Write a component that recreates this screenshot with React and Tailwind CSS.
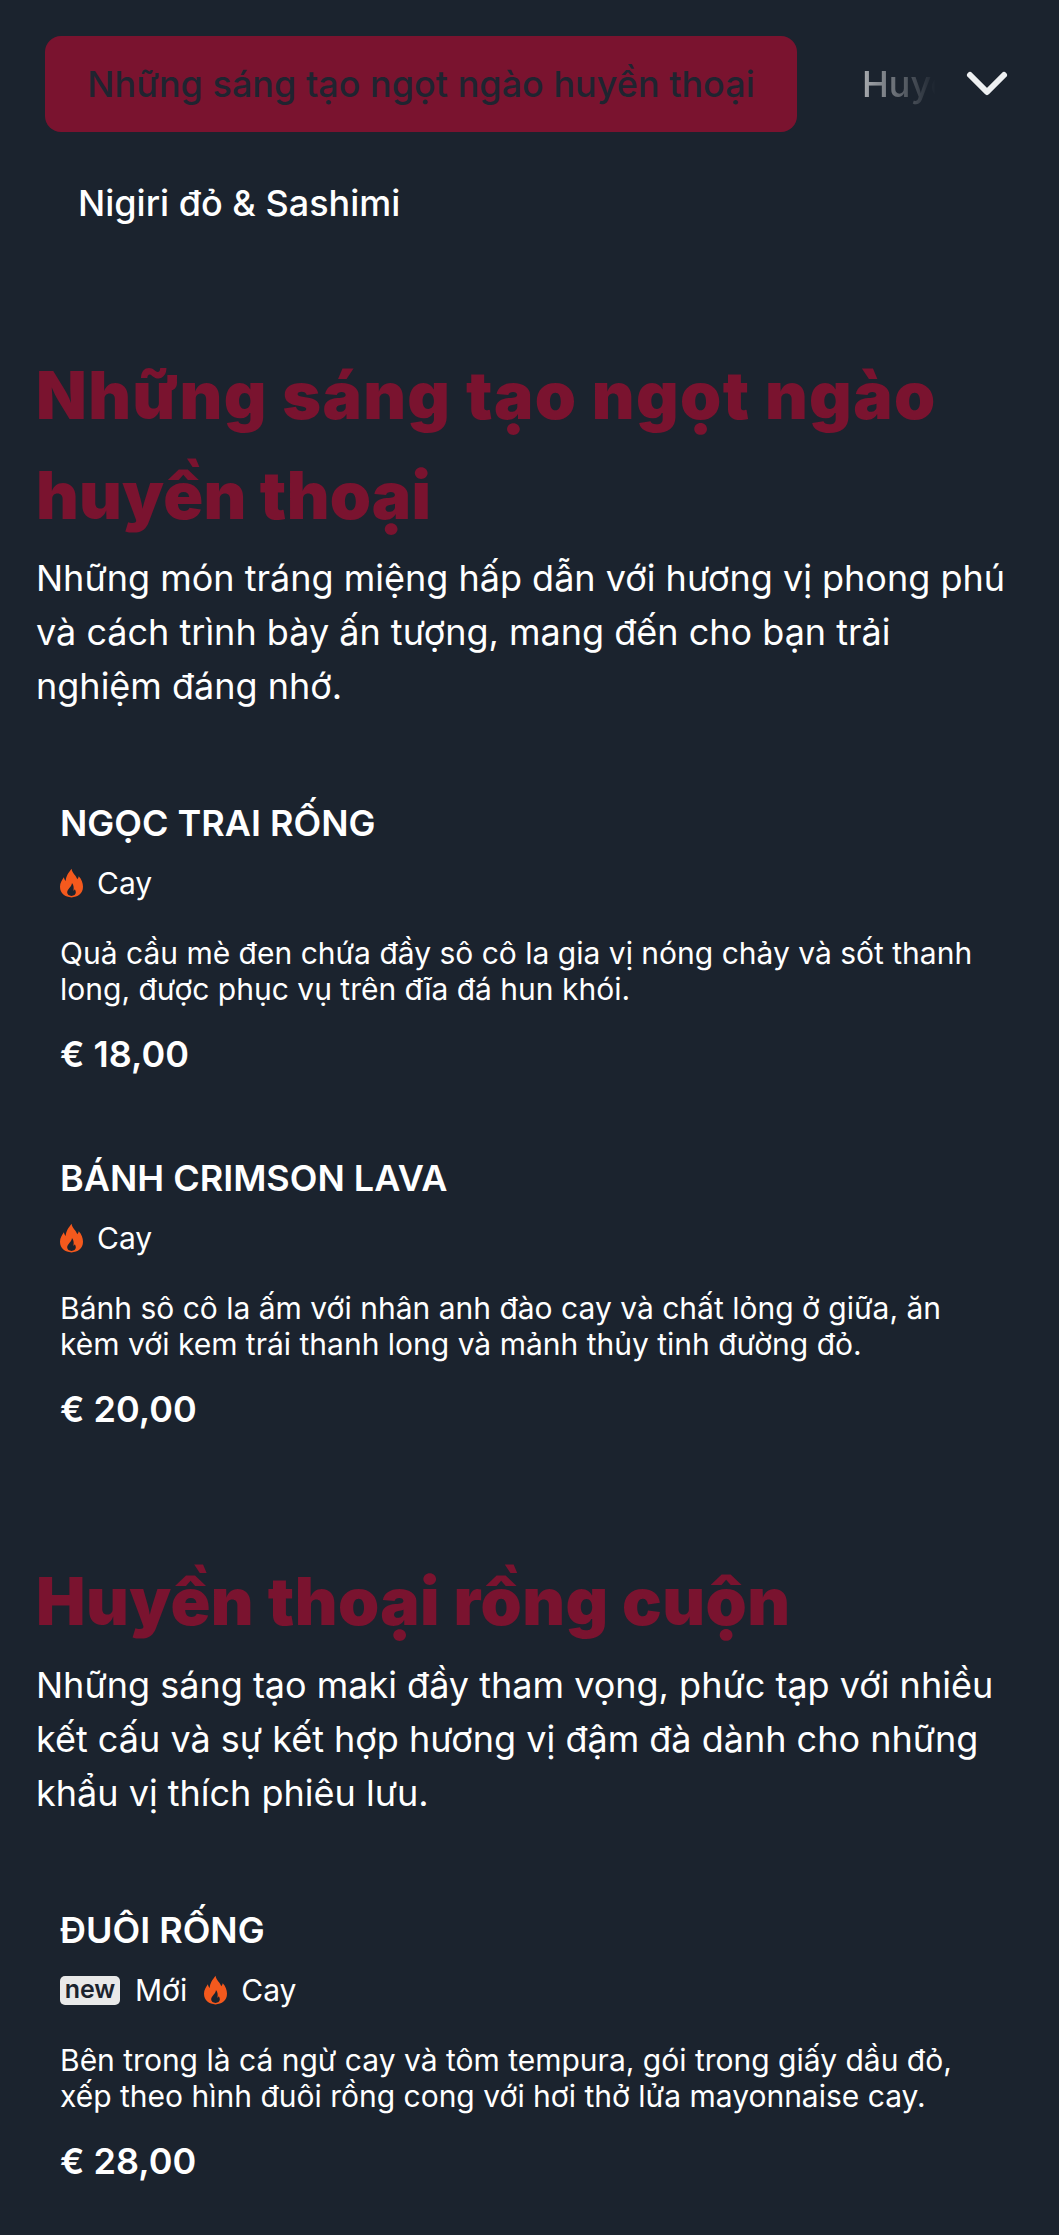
import React from "react";

const sections = [
  {
    title: [
      { text: "Những sáng tạo ngọt ngào", cls: "tracking-[1.35px]" },
      { text: "huyền thoại", cls: "tracking-[0.2px]" },
    ],
    intro: "Những món tráng miệng hấp dẫn với hương vị phong phú và cách trình bày ấn tượng, mang đến cho bạn trải nghiệm đáng nhớ.",
    introCls: "mt-[6px]",
    items: [
      {
        name: "NGỌC TRAI RỐNG",
        desc: ["Quả cầu mè đen chứa đầy sô cô la gia vị nóng chảy và sốt thanh", "long, được phục vụ trên đĩa đá hun khói."],
        price: "€ 18,00",
      },
      {
        name: "BÁNH CRIMSON LAVA",
        desc: ["Bánh sô cô la ấm với nhân anh đào cay và chất lỏng ở giữa, ăn", "kèm với kem trái thanh long và mảnh thủy tinh đường đỏ."],
        price: "€ 20,00",
      },
    ],
  },
  {
    title: [{ text: "Huyền thoại rồng cuộn", cls: "tracking-[0.4px]" }],
    intro: "Những sáng tạo maki đầy tham vọng, phức tạp với nhiều kết cấu và sự kết hợp hương vị đậm đà dành cho những khẩu vị thích phiêu lưu.",
    introCls: "mt-[7px]",
    items: [
      {
        name: "ĐUÔI RỐNG",
        isNew: true,
        desc: ["Bên trong là cá ngừ cay và tôm tempura, gói trong giấy dầu đỏ,", "xếp theo hình đuôi rồng cong với hơi thở lửa mayonnaise cay."],
        price: "€ 28,00",
      },
    ],
  },
];

function Flame() {
  return (
    <svg viewBox="0 0 24 30" className="w-[23px] h-[30px] shrink-0 mr-[14px]" aria-hidden="true">
      <path
        fill="#f4591d"
        fillRule="evenodd"
        d="M12 0C13 5 17 7 18 11C19 10 19.5 9 19.5 8C22.5 11 24 15 24 19C24 26 18.5 30 12 30C5.5 30 0 26 0 19C0 15 2 12 4 9C4.5 11 5 12 6 13C6 8 9 4 12 0ZM12.5 15C12.5 19 7.5 21 7.5 25C7.5 27 9.5 28.5 12 28.5C14.5 28.5 16.5 27 16.5 25C16.5 23.5 16 22.5 15.5 21.5C15 22.5 14.5 23 14 23C14.5 20.5 14.5 17.5 12.5 15Z"
      />
    </svg>
  );
}

function MenuItem({ item }) {
  return (
    <div className="px-[24px] pb-[78px]">
      <h3 className="text-[36px] leading-[46px] font-semibold text-white">{item.name}</h3>
      <div className="mt-[17px] flex items-center h-[40px] text-[30px] text-white">
        {item.isNew && (
          <>
            <span className="flex items-center justify-center w-[60px] h-[29px] rounded-[5px] bg-[#e9e9e9] text-[#1b232e] text-[25px] font-semibold leading-none mr-[15px] pb-[1px]">new</span>
            <span className="mr-[17px]">Mới</span>
          </>
        )}
        <Flame />
        <span>Cay</span>
      </div>
      <p className="mt-[32px] text-[30px] leading-[36px] text-white">
        {item.desc.map((line) => (
          <span key={line} className="block whitespace-nowrap">{line}</span>
        ))}
      </p>
      <div className="mt-[24px] text-[36px] leading-[46px] font-semibold text-white">{item.price}</div>
    </div>
  );
}

export default function App() {
  return (
    <div className="w-[1059px] h-[2235px] overflow-hidden bg-[#1b232e] font-['Inter',sans-serif]">
      <div className="relative pt-[36px] pl-[45px] flex items-center">
        <div className="w-[752px] h-[96px] shrink-0 rounded-[16px] bg-[#7a132f] flex items-center justify-center text-[36px] font-medium text-[#1f2430] whitespace-nowrap">
          Những sáng tạo ngọt ngào huyền thoại
        </div>
        <div className="ml-[65px] w-[74px] overflow-hidden whitespace-nowrap text-[36px] font-medium text-white [mask-image:linear-gradient(to_right,rgba(0,0,0,0.62),transparent)]">
          Huyền thoại rồng cuộn
        </div>
        <svg viewBox="0 0 44 28" className="absolute left-[965px] top-[70px] w-[44px] h-[28px] text-[#eef0f2]" fill="none" stroke="currentColor" strokeWidth="6" strokeLinecap="round" strokeLinejoin="round">
          <path d="M5 5L22 22L39 5" />
        </svg>
      </div>
      <div className="pl-[78px] pt-[46px] text-[36px] leading-[50px] font-medium text-white">Nigiri đỏ & Sashimi</div>

      <div className="px-[36px] pt-[117px]">
        {sections.map((s, i) => (
          <section key={i} className="pb-[41px]">
            <h2 className="text-[66px] leading-[100px] font-black text-[#7a132f]">
              {s.title.map((t) => (
                <span key={t.text} className={`block whitespace-nowrap ${t.cls}`}>{t.text}</span>
              ))}
            </h2>
            <p className={`mb-[87px] text-[36px] leading-[54px] text-white ${s.introCls}`}>{s.intro}</p>
            {s.items.map((item) => (
              <MenuItem key={item.name} item={item} />
            ))}
          </section>
        ))}
      </div>
    </div>
  );
}
